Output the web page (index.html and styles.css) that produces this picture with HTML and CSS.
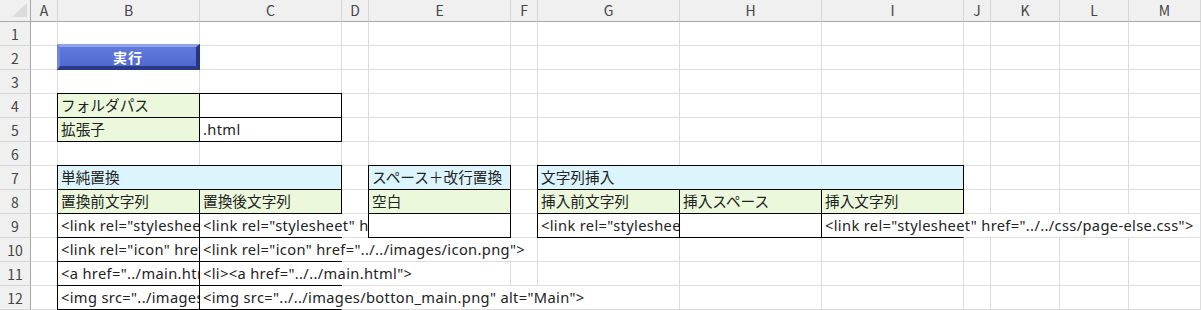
FILE: index.html
```html
<!DOCTYPE html>
<html lang="ja">
<head>
<meta charset="utf-8">
<title>Sheet</title>
<link rel="stylesheet" href="styles.css">
</head>
<body>
<div class="sheet">
  <div class="ch corner"></div>
  <div class="ch">A</div>
  <div class="ch">B</div>
  <div class="ch">C</div>
  <div class="ch">D</div>
  <div class="ch">E</div>
  <div class="ch">F</div>
  <div class="ch">G</div>
  <div class="ch">H</div>
  <div class="ch">I</div>
  <div class="ch">J</div>
  <div class="ch">K</div>
  <div class="ch">L</div>
  <div class="ch">M</div>

  <div class="rh">1</div>
  <div class="c"></div>
  <div class="c"></div>
  <div class="c"></div>
  <div class="c"></div>
  <div class="c"></div>
  <div class="c"></div>
  <div class="c"></div>
  <div class="c"></div>
  <div class="c"></div>
  <div class="c"></div>
  <div class="c"></div>
  <div class="c"></div>
  <div class="c"></div>

  <div class="rh">2</div>
  <div class="c"></div>
  <div class="c btncell"><div class="btn">実行</div></div>
  <div class="c"></div>
  <div class="c"></div>
  <div class="c"></div>
  <div class="c"></div>
  <div class="c"></div>
  <div class="c"></div>
  <div class="c"></div>
  <div class="c"></div>
  <div class="c"></div>
  <div class="c"></div>
  <div class="c"></div>

  <div class="rh">3</div>
  <div class="c"></div>
  <div class="c"></div>
  <div class="c"></div>
  <div class="c"></div>
  <div class="c"></div>
  <div class="c"></div>
  <div class="c"></div>
  <div class="c"></div>
  <div class="c"></div>
  <div class="c"></div>
  <div class="c"></div>
  <div class="c"></div>
  <div class="c"></div>

  <div class="rh">4</div>
  <div class="c"></div>
  <div class="c bx g"><span class="t">フォルダパス</span></div>
  <div class="c bx"></div>
  <div class="c"></div>
  <div class="c"></div>
  <div class="c"></div>
  <div class="c"></div>
  <div class="c"></div>
  <div class="c"></div>
  <div class="c"></div>
  <div class="c"></div>
  <div class="c"></div>
  <div class="c"></div>

  <div class="rh">5</div>
  <div class="c"></div>
  <div class="c bx g"><span class="t">拡張子</span></div>
  <div class="c bx"><span class="t ltn">.html</span></div>
  <div class="c"></div>
  <div class="c"></div>
  <div class="c"></div>
  <div class="c"></div>
  <div class="c"></div>
  <div class="c"></div>
  <div class="c"></div>
  <div class="c"></div>
  <div class="c"></div>
  <div class="c"></div>

  <div class="rh">6</div>
  <div class="c"></div>
  <div class="c"></div>
  <div class="c"></div>
  <div class="c"></div>
  <div class="c"></div>
  <div class="c"></div>
  <div class="c"></div>
  <div class="c"></div>
  <div class="c"></div>
  <div class="c"></div>
  <div class="c"></div>
  <div class="c"></div>
  <div class="c"></div>

  <div class="rh">7</div>
  <div class="c"></div>
  <div class="c bx b span2"><span class="t">単純置換</span></div>
  <div class="c"></div>
  <div class="c bx b"><span class="t">スペース＋改行置換</span></div>
  <div class="c"></div>
  <div class="c bx b span3"><span class="t">文字列挿入</span></div>
  <div class="c"></div>
  <div class="c"></div>
  <div class="c"></div>
  <div class="c"></div>

  <div class="rh">8</div>
  <div class="c"></div>
  <div class="c bx g"><span class="t">置換前文字列</span></div>
  <div class="c bx g"><span class="t">置換後文字列</span></div>
  <div class="c"></div>
  <div class="c bx g"><span class="t">空白</span></div>
  <div class="c"></div>
  <div class="c bx g"><span class="t">挿入前文字列</span></div>
  <div class="c bx g"><span class="t">挿入スペース</span></div>
  <div class="c bx g"><span class="t">挿入文字列</span></div>
  <div class="c"></div>
  <div class="c"></div>
  <div class="c"></div>
  <div class="c"></div>

  <div class="rh">9</div>
  <div class="c"></div>
  <div class="c bx clip"><span class="t ltn">&lt;link rel="stylesheet" href="../css/page-else.css"&gt;</span></div>
  <div class="c bxo ovf"><span class="t ltn wide2">&lt;link rel="stylesheet" href="../../css/page-else.css"&gt;</span></div>
  <div class="c"></div>
  <div class="c bx"></div>
  <div class="c"></div>
  <div class="c bx clip"><span class="t ltn">&lt;link rel="stylesheet" href="../../css/page.css"&gt;</span></div>
  <div class="c bx"></div>
  <div class="c bxo ovf"><span class="t ltn">&lt;link rel="stylesheet" href="../../css/page-else.css"&gt;</span></div>
  <div class="c"></div>
  <div class="c"></div>
  <div class="c"></div>
  <div class="c"></div>

  <div class="rh">10</div>
  <div class="c"></div>
  <div class="c bx clip"><span class="t ltn">&lt;link rel="icon" href="../images/icon.png"&gt;</span></div>
  <div class="c bxo ovf"><span class="t ltn">&lt;link rel="icon" href="../../images/icon.png"&gt;</span></div>
  <div class="c"></div>
  <div class="c"></div>
  <div class="c"></div>
  <div class="c"></div>
  <div class="c"></div>
  <div class="c"></div>
  <div class="c"></div>
  <div class="c"></div>
  <div class="c"></div>
  <div class="c"></div>

  <div class="rh">11</div>
  <div class="c"></div>
  <div class="c bx clip"><span class="t ltn">&lt;a href="../main.html"&gt;</span></div>
  <div class="c bxo ovf"><span class="t ltn">&lt;li&gt;&lt;a href="../../main.html"&gt;</span></div>
  <div class="c"></div>
  <div class="c"></div>
  <div class="c"></div>
  <div class="c"></div>
  <div class="c"></div>
  <div class="c"></div>
  <div class="c"></div>
  <div class="c"></div>
  <div class="c"></div>
  <div class="c"></div>

  <div class="rh">12</div>
  <div class="c"></div>
  <div class="c bx clip"><span class="t ltn">&lt;img src="../images/botton_main.png" alt="Main"&gt;</span></div>
  <div class="c bxo ovf"><span class="t ltn">&lt;img src="../../images/botton_main.png" alt="Main"&gt;</span></div>
  <div class="c"></div>
  <div class="c"></div>
  <div class="c"></div>
  <div class="c"></div>
  <div class="c"></div>
  <div class="c"></div>
  <div class="c"></div>
  <div class="c"></div>
  <div class="c"></div>
  <div class="c"></div>
</div>
</body>
</html>
```

FILE: styles.css
```css
html, body {
  margin: 0;
  padding: 0;
  background: #ffffff;
  overflow: hidden;
}

.sheet {
  display: grid;
  grid-template-columns: 31px 27px 142px 142px 27px 142px 27px 142px 142px 142px 27px 69px 69px 72px;
  grid-template-rows: 22px repeat(12, 24px);
  width: 1201px;
  height: 310px;
  font-family: "Noto Sans", "Noto Sans CJK JP", sans-serif;
  font-size: 14.67px;
  color: #222222;
}

.sheet > div {
  box-sizing: border-box;
  min-width: 0;
}

.ch {
  background: #f0f0f0;
  border-right: 1px solid #d6d6d6;
  border-bottom: 1px solid #a8a8a8;
  color: #444444;
  font-family: "Noto Sans CJK JP", sans-serif;
  font-size: 14px;
  display: flex;
  align-items: center;
  justify-content: center;
  line-height: 1;
  padding-bottom: 1px;
}

.corner {
  justify-content: flex-end;
  align-items: flex-end;
  border-right-color: #a8a8a8;
}

.corner::after {
  content: "";
  width: 15px;
  height: 14px;
  margin: 0 3px 3px 0;
  background: #dcdcdc;
  clip-path: polygon(100% 0, 100% 100%, 0 100%);
}

.rh {
  grid-column: 1;
  background: #f0f0f0;
  border-right: 1px solid #a8a8a8;
  border-bottom: 1px solid #d6d6d6;
  color: #444444;
  font-family: "Noto Sans CJK JP", sans-serif;
  font-size: 14px;
  display: flex;
  align-items: center;
  justify-content: center;
  line-height: 1;
}

.c {
  border-right: 1px solid #dcdcdc;
  border-bottom: 1px solid #dcdcdc;
  white-space: nowrap;
  line-height: 23px;
}

.bx {
  border-right-color: #000;
  border-bottom-color: #000;
  box-shadow: -1px 0 0 0 #000, 0 -1px 0 0 #000, -1px -1px 0 0 #000;
}

.bxo {
  border-bottom-color: #000;
  box-shadow: -1px 0 0 0 #000, 0 -1px 0 0 #000, -1px -1px 0 0 #000;
}

.g { background: #ebf8dc; }
.b { background: #dcf4fc; }

.span2 { grid-column: span 2; }
.span3 { grid-column: span 3; }

.t {
  display: inline-block;
  vertical-align: top;
  height: 23px;
  padding: 0 3px;
  box-sizing: border-box;
}

.ltn { letter-spacing: 0.35px; }

.clip { overflow: hidden; }

.ovf { z-index: 1; }

.ovf .t { background: #ffffff; }

.wide2 {
  max-width: 168px;
  overflow: hidden;
}

.btncell {
  overflow: visible;
  z-index: 1;
}

.btn {
  box-sizing: border-box;
  width: 143px;
  height: 26px;
  margin: -2px 0 0 -1px;
  border-top: 3px solid #90a4ec;
  border-left: 3px solid #6e87de;
  border-right: 4px solid #26357e;
  border-bottom: 4px solid #2b3a88;
  background: linear-gradient(#607bdb, #5069d0);
  color: #ffffff;
  font-family: "Noto Sans CJK JP", sans-serif;
  font-weight: bold;
  font-size: 14px;
  line-height: 1;
  display: flex;
  align-items: center;
  justify-content: center;
  letter-spacing: 1px;
}
```
